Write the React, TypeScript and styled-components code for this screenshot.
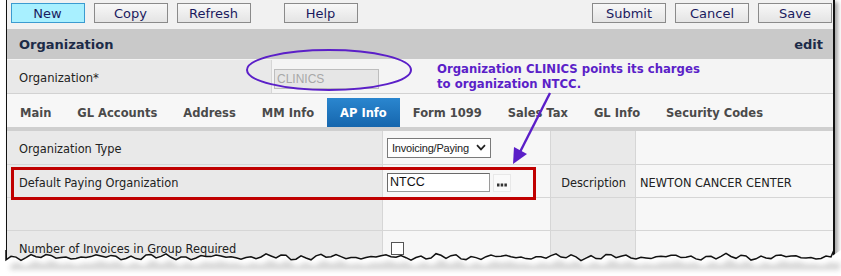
import styled, { createGlobalStyle } from 'styled-components';

const GlobalStyle = createGlobalStyle`
  html, body {
    margin: 0;
    padding: 0;
    background: #ffffff;
  }
  * {
    box-sizing: border-box;
  }
`;

const leftButtons = ['New', 'Copy', 'Refresh'];
const rightButtons = ['Submit', 'Cancel', 'Save'];
const tabs = ['Main', 'GL Accounts', 'Address', 'MM Info', 'AP Info', 'Form 1099', 'Sales Tax', 'GL Info', 'Security Codes'];

// jagged torn edge along the bottom of the screenshot
const tornEdge = (() => {
  const pts: [number, number][] = [];
  for (let x = 6; x <= 834; x += 5) {
    const n = Math.sin(x * 0.37) * 1.6 + Math.sin(x * 0.11) * 1.3 + Math.cos(x * 0.93) * 0.9;
    pts.push([x, 257 + n]);
  }
  return pts;
})();

const edgeStr = (dx: number, dy: number) => tornEdge.map(([x, y]) => `${x + dx},${(y + dy).toFixed(1)}`).join(' ');

const App = () => {
  return (
    <>
      <GlobalStyle />
      <Page>
        <Frame>
          <Toolbar>
            {leftButtons.map((b, i) => (
              <ToolButton key={b} $primary={i === 0}>
                {b}
              </ToolButton>
            ))}
            <ToolButton $gap>Help</ToolButton>
            <Spacer />
            {rightButtons.map((b) => (
              <ToolButton key={b}>{b}</ToolButton>
            ))}
          </Toolbar>

          <SectionHeader>
            <span>Organization</span>
            <span>edit</span>
          </SectionHeader>

          <OrgRow>
            <OrgLabel>Organization*</OrgLabel>
            <OrgValue>
              <DisabledInput value="CLINICS" readOnly />
            </OrgValue>
          </OrgRow>

          <TabBar>
            {tabs.map((t) => (
              <Tab key={t} $active={t === 'AP Info'}>
                {t}
              </Tab>
            ))}
          </TabBar>

          <FormGrid>
            <LabelCell>Organization Type</LabelCell>
            <ValueCell>
              <SelectBox>
                <span>Invoicing/Paying</span>
                <svg width="10" height="7" viewBox="0 0 10 7">
                  <path d="M1 1.2 L5 5.4 L9 1.2" fill="none" stroke="#222" strokeWidth="1.7" />
                </svg>
              </SelectBox>
            </ValueCell>
            <DescLabel />
            <DescValue />

            <LabelCell>Default Paying Organization</LabelCell>
            <ValueCell>
              <TextInput value="NTCC" readOnly />
              <LookupButton>
                <svg width="10" height="4" viewBox="0 0 10 4">
                  <rect x="0" y="0.5" width="2.5" height="3" fill="#333" />
                  <rect x="3.7" y="0.5" width="2.5" height="3" fill="#333" />
                  <rect x="7.4" y="0.5" width="2.5" height="3" fill="#333" />
                </svg>
              </LookupButton>
            </ValueCell>
            <DescLabel>Description</DescLabel>
            <DescValue>NEWTON CANCER CENTER</DescValue>

            <LabelCell />
            <ValueCell />
            <DescLabel />
            <DescValue />

            <LabelCell>Number of Invoices in Group Required</LabelCell>
            <ValueCell>
              <CheckBox />
            </ValueCell>
            <DescLabel />
            <DescValue />
          </FormGrid>
        </Frame>

        <Callout>
          Organization CLINICS points its charges
          <br />
          to organization NTCC.
        </Callout>
        <HighlightBox />

        <Overlay width="841" height="276" viewBox="0 0 841 276">
          <defs>
            <filter id="sh" x="-5%" y="-50%" width="110%" height="200%">
              <feGaussianBlur stdDeviation="2.4" />
            </filter>
          </defs>
          <ellipse cx="329" cy="70" rx="82" ry="20" fill="none" stroke="#5b1fc8" strokeWidth="2" />
          <line x1="550" y1="93" x2="520" y2="152" stroke="#5b1fc8" strokeWidth="2.4" />
          <polygon points="513,164 514,147 527,154" fill="#5b1fc8" />
          <polygon points={`0,250 ${edgeStr(0, 0)} 841,250 841,276 0,276`} fill="#ffffff" />
          <polyline points={`10,262 ${edgeStr(4, 6)} 840,262 840,270 10,270`} fill="#8a8a8a" opacity="0.5" filter="url(#sh)" />
          <polygon points={`0,250 ${edgeStr(0, 0)} 841,250 841,276 0,276`} fill="#ffffff" opacity="0.35" />
          <polyline points={`6,250 ${edgeStr(0, 0)} 834,250`} fill="none" stroke="#111" strokeWidth="1.5" />
        </Overlay>
      </Page>
    </>
  );
};

const Page = styled.div`
  position: relative;
  width: 841px;
  height: 276px;
  overflow: hidden;
  background: #ffffff;
  font-family: 'DejaVu Sans', Verdana, sans-serif;
`;

const Frame = styled.div`
  margin-left: 6px;
  width: 829px;
  height: 262px;
  border-left: 1.5px solid #111;
  border-right: 2px solid #111;
  overflow: hidden;
  background: #f7f7f7;
  box-shadow: 3px 2px 4px rgba(0, 0, 0, 0.35);
`;

const Toolbar = styled.div`
  height: 29px;
  display: flex;
  align-items: flex-start;
  padding: 3px 0 0 3.5px;
  gap: 9px;
  background: #f1f1f1;
`;

const Spacer = styled.div`
  flex: 1;
`;

const ToolButton = styled.div<{ $primary?: boolean; $gap?: boolean }>`
  width: 74px;
  height: 20px;
  display: flex;
  align-items: center;
  justify-content: center;
  font-size: 13px;
  color: #1a1a5e;
  border: 1px solid ${(p) => (p.$primary ? '#3b9bd0' : '#8a8a8a')};
  background: ${(p) => (p.$primary ? '#a8f0ff' : 'linear-gradient(#f8f8f8, #e4e4e4)')};
  margin-left: ${(p) => (p.$gap ? '24px' : '0')};
  &:last-child {
    margin-right: 1px;
  }
`;

const SectionHeader = styled.div`
  height: 31px;
  display: flex;
  align-items: center;
  justify-content: space-between;
  padding: 1px 10px 0 12px;
  background: #c9c9c9;
  border-bottom: 1px solid #f4f4f4;
  color: #1c2b48;
  font-weight: bold;
  font-size: 13px;
`;

const OrgRow = styled.div`
  height: 34px;
  display: flex;
  border-bottom: 1px solid #d2d2d2;
`;

const OrgLabel = styled.div`
  width: 265px;
  display: flex;
  align-items: center;
  padding: 3px 0 0 12px;
  font-size: 11.6px;
  color: #222;
  background: #e9e9e9;
  border-right: 1px solid #d6d6d6;
`;

const OrgValue = styled.div`
  flex: 1;
  display: flex;
  align-items: center;
  padding-left: 2px;
  background: #f4f4f4;
`;

const DisabledInput = styled.input`
  width: 105px;
  height: 20px;
  border: 1px solid #bdbdbd;
  background: #e6e6e6;
  color: #a8a8a8;
  font-family: 'Liberation Sans', Arial, sans-serif;
  font-size: 12px;
  padding: 0 2px;
  margin-top: 4px;
`;

const TabBar = styled.div`
  height: 37px;
  display: flex;
  align-items: flex-end;
  background: #f7f7f7;
  border-bottom: 4px solid #cfcfcf;
`;

const Tab = styled.div<{ $active?: boolean }>`
  height: 29px;
  display: flex;
  align-items: center;
  padding: 1px 13px 0;
  font-size: 11.5px;
  font-weight: bold;
  color: ${(p) => (p.$active ? '#ffffff' : '#4a4a4a')};
  background: ${(p) => (p.$active ? 'linear-gradient(#2a86cf, #1666ad)' : 'transparent')};
`;

const FormGrid = styled.div`
  display: grid;
  grid-template-columns: 376px 168px 85px 1fr;
  grid-template-rows: 34px 33px 33px 33px;
`;

const Cell = styled.div`
  display: flex;
  align-items: center;
  padding-top: 3px;
  font-size: 11.4px;
  color: #222;
  border-bottom: 1px solid #d6d6d6;
  border-right: 1px solid #d6d6d6;
`;

const LabelCell = styled(Cell)`
  padding-left: 12px;
  background: #e9e9e9;
`;

const ValueCell = styled(Cell)`
  padding-top: 0;
  padding-left: 4px;
  gap: 3px;
  background: #f7f7f7;
`;

const DescLabel = styled(Cell)`
  justify-content: flex-end;
  padding-right: 9px;
  background: #e9e9e9;
`;

const DescValue = styled(Cell)`
  padding-left: 4px;
  background: #f7f7f7;
  border-right: none;
`;

const SelectBox = styled.div`
  width: 104px;
  height: 20px;
  display: flex;
  align-items: center;
  justify-content: space-between;
  padding: 0 4px 0 4px;
  border: 1px solid #7a7a7a;
  background: #ffffff;
  font-family: 'Liberation Sans', Arial, sans-serif;
  font-size: 11px;
  letter-spacing: -0.2px;
  color: #222;
`;

const TextInput = styled.input`
  width: 103px;
  height: 19px;
  margin-top: 2px;
  border: 1px solid #9a9a9a;
  border-top-color: #6a6a6a;
  border-left-color: #6a6a6a;
  background: #ffffff;
  font-family: 'Liberation Sans', Arial, sans-serif;
  font-size: 12.5px;
  color: #111;
  padding: 0 2px;
`;

const LookupButton = styled.div`
  width: 18px;
  height: 18px;
  margin-top: 4px;
  display: flex;
  align-items: flex-end;
  justify-content: center;
  padding-bottom: 4px;
  background: #fafafa;
  border: 1px solid #e8e8e8;
`;

const CheckBox = styled.div`
  width: 13px;
  height: 13px;
  margin-left: 4px;
  align-self: flex-start;
  margin-top: 11px;
  border: 1px solid #555;
  background: #ffffff;
`;

const Callout = styled.div`
  position: absolute;
  left: 437px;
  top: 62px;
  font-size: 11.7px;
  line-height: 15px;
  font-weight: bold;
  color: #5b1fc8;
`;

const HighlightBox = styled.div`
  position: absolute;
  left: 11px;
  top: 167px;
  width: 525px;
  height: 33px;
  border: 3px solid #c00000;
`;

const Overlay = styled.svg`
  position: absolute;
  left: 0;
  top: 0;
  pointer-events: none;
`;

export default App;
